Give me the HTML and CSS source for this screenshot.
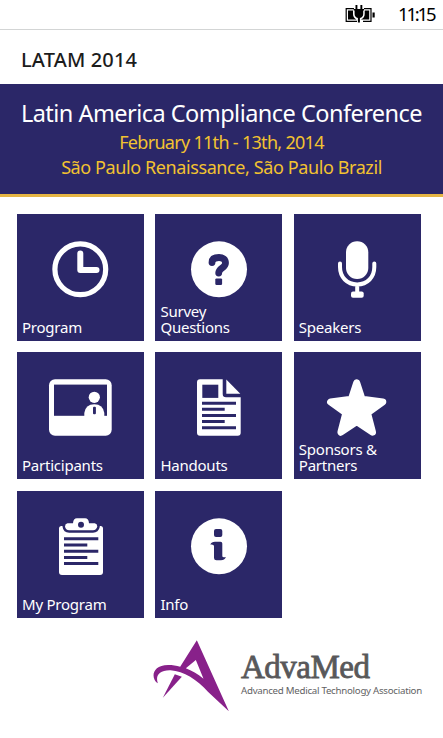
FILE: index.html
```
<!DOCTYPE html>
<html lang="en">
<head>
  <meta charset="utf-8">
  <title>LATAM 2014</title>
  <link rel="stylesheet" href="styles.css">
</head>
<body>
  <div class="status-bar">
    <svg class="battery" viewBox="0 0 31 18" width="31" height="18">
      <path d="M9 3.7H1.2V16.3H12M18 16.3H26V3.7H19" fill="none" stroke="#000" stroke-width="1.2"/>
      <path d="M3 5.500H8V9Q8 12.500 11.500 14.500H3ZM24.200 5.500H19.700V9Q19.700 12.500 16 14.500H24.200ZM27.500 7.500h2.200v5h-2.200z"/>
      <path d="M10.500 0h1.900v4h3V0h1.900v4H19v1.500h-.8V9q0 3-3.300 4v4.500h-2V13Q9.600 12 9.600 9V5.500H8.700V4h1.800z"/>
    </svg>
    <span class="time">11:15</span>
  </div>

  <h1 class="app-title">LATAM 2014</h1>

  <div class="banner">
    <h2>Latin America Compliance Conference</h2>
    <p class="date">February 11th - 13th, 2014</p>
    <p class="place">São Paulo Renaissance, São Paulo Brazil</p>
  </div>

  <div class="tiles">
    <a class="tile">
      <svg viewBox="0 0 127 127">
        <circle class="line" cx="63.300" cy="55.300" r="25.400" stroke-width="5.200"/>
        <path class="line" d="M63.300 39.500V56H79.500" stroke-width="6"/>
      </svg>
      <span class="label">Program</span>
    </a>
    <a class="tile">
      <svg viewBox="0 0 127 127">
        <circle cx="64" cy="55.300" r="28"/>
        <path class="cut-line" d="M57 48.500C57 44.800 60 43.500 64 43.500C68 43.500 70.500 45.500 70.500 49C70.500 54 63.700 54 63.700 59" stroke-width="6.800"/>
        <rect class="cut" x="60.300" y="64.400" width="6.800" height="6.600" rx="1.200"/>
      </svg>
      <span class="label">Survey<br>Questions</span>
    </a>
    <a class="tile">
      <svg viewBox="0 0 127 127">
        <rect x="52" y="27.300" width="22.300" height="37.700" rx="11"/>
        <path class="line" d="M46 49.500V53C46 63 53 70.500 63.200 70.500S80.300 63 80.300 53V49.500M63.200 71V79" stroke-width="4"/>
        <rect x="57" y="77.500" width="12.700" height="6.200" rx="2"/>
      </svg>
      <span class="label">Speakers</span>
    </a>
    <a class="tile">
      <svg viewBox="0 0 127 127">
        <rect x="32" y="27.300" width="62.700" height="56.400" rx="6"/>
        <rect class="cut" x="37" y="32.600" width="53" height="31.200"/>
        <circle cx="77.300" cy="45.300" r="5.600"/>
        <path d="M67.300 65V61Q68.500 52.300 77.300 52.300T87.300 61V65Z"/>
        <rect class="cut" x="76" y="54.800" width="2.900" height="7.500" rx="1"/>
      </svg>
      <span class="label">Participants</span>
    </a>
    <a class="tile">
      <svg viewBox="0 0 127 127">
        <path d="M45 27.300H67.700V42Q67.700 45.300 71 45.300H85.700V80.700Q85.700 83.700 82.700 83.700H45Q42 83.700 42 80.700V30.300Q42 27.300 45 27.300Z"/>
        <path d="M71.300 27.500V41.700H85.300Z"/>
        <rect class="cut" x="47.300" y="32.700" width="16" height="13.200"/>
        <path class="rules" d="M47 51.200H81M47 57.300H69.700M47 63.500H81M47 69.500H69.700M47 75.700H81"/>
      </svg>
      <span class="label">Handouts</span>
    </a>
    <a class="tile">
      <svg viewBox="0 0 127 127">
        <path class="star" d="M62.700 30.800L68 47.200L88.800 50L73.500 61L78.500 80.200L62.700 69.600L46.900 80.200L51.900 61L36.600 50L57.400 47.200Z"/>
      </svg>
      <span class="label">Sponsors &amp;<br>Partners</span>
    </a>
    <a class="tile">
      <svg viewBox="0 0 127 127">
        <path d="M42 37.500Q42 35 44.500 35H83.500Q86 35 86 37.500V81Q86 84 83 84H45Q42 84 42 81Z"/>
        <path class="clip" d="M50.500 32.300H56Q56.300 27.300 60 27.300H68Q71.700 27.300 72 32.300H77.700Q80.300 32.800 80.300 35.500Q79.500 39.200 76 39.200H52.200Q48.500 39.200 48 35.500Q48 32.800 50.500 32.300Z"/>
        <circle class="cut" cx="64" cy="33.700" r="3"/>
        <path class="rules" d="M47 47.800H81.300M47 54H70.300M47 60.300H81.300M47 66.400H70.300M47 72.600H81.300"/>
      </svg>
      <span class="label">My Program</span>
    </a>
    <a class="tile">
      <svg viewBox="0 0 127 127">
        <circle cx="64" cy="55.300" r="28"/>
        <rect class="cut" x="59" y="38" width="8.300" height="8" rx="2"/>
        <path class="cut" d="M55.300 53.500Q56.500 50.700 60 50.700H65.500Q67.300 50.700 67.300 52.500V65Q67.300 67 70.900 66Q69.500 69.300 66 69.300H61.500Q59 69.300 59 67V55Q59 53 55.300 53.500Z"/>
      </svg>
      <span class="label">Info</span>
    </a>
  </div>

  <div class="sponsor">
    <svg class="mark" viewBox="40 28 230 216">
      <path fill-rule="evenodd" d="M54 158C33 145 34 103 85 103C98 103 110 105 121 108L171 29L267 242L205 184C172 148 132 121 92 119C58 118 46 135 54 158ZM168 88L138 113C156 120 173 130 191 144Z"/>
      <path d="M105 131L126 138L69 201Z"/>
    </svg>
    <div class="wordmark">
      <div class="name">AdvaMed</div>
      <div class="tagline">Advanced Medical Technology Association</div>
    </div>
  </div>
</body>
</html>
```
FILE: styles.css
```
:root {
  --navy: #2b2768;
  --gold: #f2c230;
}

* {
  box-sizing: border-box;
}

body {
  margin: 0;
  height: 738px;
  background: #fff;
  font-family: "Noto Sans", "Open Sans", sans-serif;
  overflow: hidden;
}

h1, h2, p {
  margin: 0;
  font-weight: 400;
  white-space: nowrap;
}

.status-bar {
  display: flex;
  justify-content: flex-end;
  height: 30px;
  padding-right: 10px;
  border-bottom: 1px solid #d3d5d5;
}

.battery {
  margin: 5px 22px 0 0;
}

.time {
  width: 35px;
  font-size: 18.5px;
  line-height: 28px;
  letter-spacing: -2.2px;
  white-space: nowrap;
}

.app-title {
  height: 54px;
  padding-left: 21px;
  color: #1c1c1c;
  font-size: 20px;
  font-weight: 500;
  line-height: 60px;
  letter-spacing: 0.15px;
}

.banner {
  height: 113px;
  padding-top: 13px;
  background: var(--navy);
  border-bottom: 3px solid #e5b544;
  color: var(--gold);
  font-size: 18px;
  line-height: 25px;
  text-align: center;
}

.banner h2 {
  color: #fff;
  font-size: 23.5px;
  line-height: 33px;
  letter-spacing: -0.53px;
}

.date {
  letter-spacing: -0.7px;
}

.place {
  letter-spacing: -0.4px;
}

.tiles {
  display: grid;
  grid-template-columns: repeat(3, 127px);
  grid-auto-rows: 127px;
  gap: 11.4px;
  padding: 17px 0 0 17px;
}

/* icon and label share one grid cell */
.tile {
  display: grid;
  background: var(--navy);
  color: #fff;
}

.tile svg,
.label {
  grid-area: 1 / 1;
}

.tile svg {
  width: 127px;
  height: 127px;
  fill: #fff;
}

.tile .line {
  fill: none;
  stroke: #fff;
  stroke-linecap: round;
  stroke-linejoin: round;
}

.tile .cut {
  fill: var(--navy);
}

.tile .cut-line {
  fill: none;
  stroke: var(--navy);
  stroke-linecap: round;
}

.tile .rules {
  fill: none;
  stroke: var(--navy);
  stroke-width: 3;
}

.tile .star {
  stroke: #fff;
  stroke-width: 7;
  stroke-linejoin: round;
}

.tile .clip {
  stroke: var(--navy);
  stroke-width: 5;
  paint-order: stroke;
}

.label {
  align-self: end;
  padding: 0 0 6px 5px;
  font-size: 15px;
  line-height: 16px;
  letter-spacing: -0.23px;
}

.sponsor {
  display: flex;
  padding: 22px 0 0 153px;
}

.mark {
  width: 77px;
  height: 72px;
  fill: #88218a;
}

.wordmark {
  padding: 10px 0 0 11px;
  white-space: nowrap;
}

.name {
  color: #58585a;
  font-family: "Liberation Serif", serif;
  font-size: 33px;
  line-height: 34px;
  letter-spacing: -0.5px;
  -webkit-text-stroke: 0.8px #58585a;
}

.tagline {
  color: #626264;
  font-size: 9.7px;
  line-height: 13px;
  letter-spacing: -0.26px;
}
```
